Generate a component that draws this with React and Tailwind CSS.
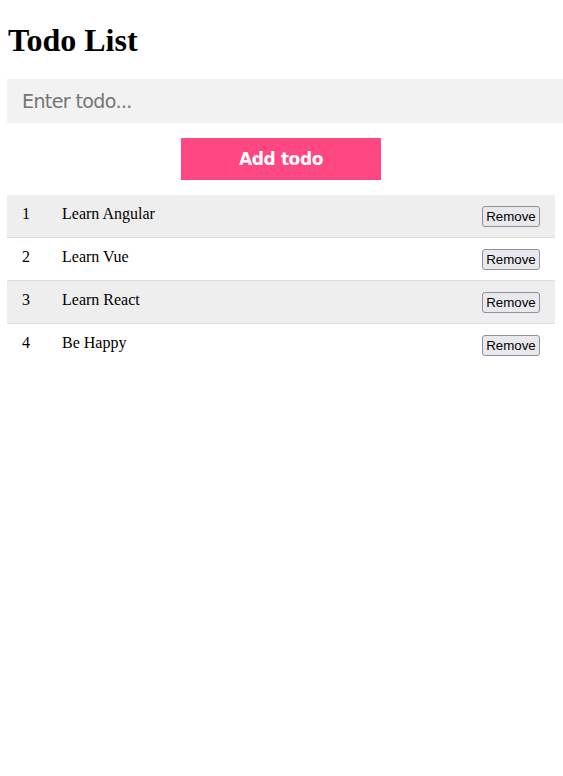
import { useState } from "react";

const initialTodos = ["Learn Angular", "Learn Vue", "Learn React", "Be Happy"];

const App = () => {
  const [todos, setTodos] = useState(initialTodos);
  const [text, setText] = useState("");

  const addTodo = () => {
    if (!text.trim()) return;
    setTodos([...todos, text.trim()]);
    setText("");
  };

  const removeTodo = (index) => setTodos(todos.filter((_, i) => i !== index));

  return (
    <div className="min-h-[776px] bg-white pl-[7px] pt-[22px] font-['Liberation_Serif',serif] text-black">
      <h1 className="pl-[1px] text-[32px] font-bold leading-[37px]">Todo List</h1>

      <input
        value={text}
        onChange={(e) => setText(e.target.value)}
        placeholder="Enter todo..."
        className="mt-[20px] block h-[44px] w-[556px] bg-[#f2f2f2] px-[15px] font-['DejaVu_Sans',sans-serif] text-[19px] tracking-[-0.6px] text-black outline-none placeholder:text-[#757575]"
      />

      <div className="mt-[15px] flex w-[548px] justify-center">
        <button
          onClick={addTodo}
          className="h-[42px] w-[200px] bg-[#ff4781] pt-[2px] font-['DejaVu_Sans',sans-serif] text-[17px] font-bold tracking-[-0.4px] text-white"
        >
          Add todo
        </button>
      </div>

      <ul className="mt-[15px] w-[548px]">
        {todos.map((todo, i) => (
          <li
            key={i}
            className={`flex h-[43px] items-center border-b border-[#dddddd] pl-[15px] pr-[15px] text-[16px] last:border-transparent ${
              i % 2 === 0 ? "bg-[#eeeeee]" : "bg-white"
            }`}
          >
            <span className="mt-[-4px] w-[40px]">{i + 1}</span>
            <span className="mt-[-4px] flex-1">{todo}</span>
            <button
              onClick={() => removeTodo(i)}
              className="mt-0 h-[21px] w-[58px] rounded-[3px] border border-[#8f8f9d] bg-[#e9e9ed] font-['Liberation_Sans',sans-serif] text-[13.3px] leading-[17px] text-black"
            >
              Remove
            </button>
          </li>
        ))}
      </ul>
    </div>
  );
};

export default App;
